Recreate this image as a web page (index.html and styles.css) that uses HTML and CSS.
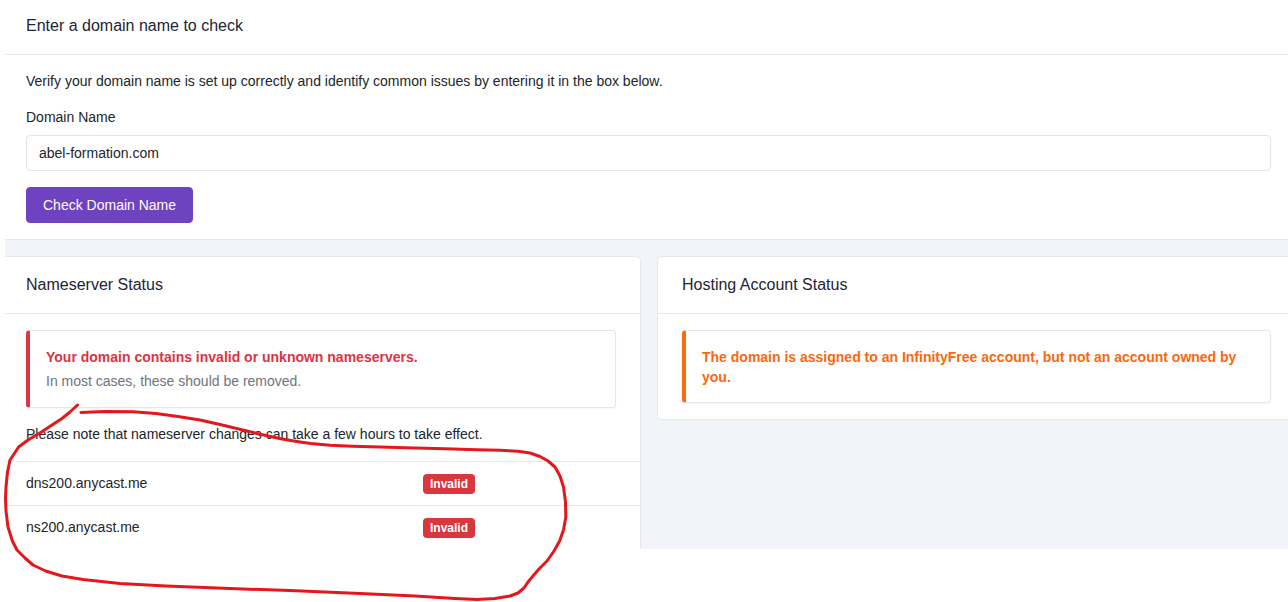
FILE: index.html
```html
<!DOCTYPE html>
<html lang="en">
<head>
<meta charset="utf-8">
<title>Domain Checker</title>
<link rel="stylesheet" href="styles.css">
</head>
<body>
<div class="page">
  <section class="card card-top">
    <div class="card-header card-header-top">Enter a domain name to check</div>
    <div class="card-body card-body-top">
      <p class="intro">Verify your domain name is set up correctly and identify common issues by entering it in the box below.</p>
      <label class="label" for="domain">Domain Name</label>
      <input class="input" id="domain" type="text" value="abel-formation.com">
      <button class="btn" type="button">Check Domain Name</button>
    </div>
  </section>

  <div class="row">
    <section class="card card-left">
      <div class="card-header">Nameserver Status</div>
      <div class="card-body">
        <div class="alert alert-danger">
          <div class="alert-title">Your domain contains invalid or unknown nameservers.</div>
          <div class="alert-text">In most cases, these should be removed.</div>
        </div>
        <p class="note">Please note that nameserver changes can take a few hours to take effect.</p>
      </div>
      <ul class="list">
        <li class="list-item"><span>dns200.anycast.me</span><span class="badge">Invalid</span></li>
        <li class="list-item"><span>ns200.anycast.me</span><span class="badge">Invalid</span></li>
      </ul>
    </section>

    <section class="card card-right">
      <div class="card-header">Hosting Account Status</div>
      <div class="card-body">
        <div class="alert alert-warning">
          <div class="alert-title">The domain is assigned to an InfinityFree account, but not an account owned by you.</div>
        </div>
      </div>
    </section>
  </div>
</div>

<svg class="scribble" viewBox="0 0 1288 602" width="1288" height="602" aria-hidden="true">
  <polyline fill="none" stroke="#e4181c" stroke-width="3" stroke-linejoin="round" stroke-linecap="round"
    points="81,412.5 105,411.5 133,411.8 156,413.5 178,416.5 200,420 220,424.5 249,431.5 266,435.5 282,439 300,442 311,443.6 330,445.3 352,446.3 380,447 415,448 445,448.8 477,449.7 500,450.3 518,451.3 530,453 540,456.5 548,461 555,467 560,476 563.5,487 565.5,502 565.8,517 563.5,530 559.6,541 554,551 547,561 539,569 533,576 528,582 524,588 518,593 510,596 495,598.5 477,599.5 455,598.5 415,596 360,593.5 290,590.6 230,588.5 166,586 120,583.5 83,579.5 62,576 45.6,571 33,565 25,558 17,550 12.4,541 8,527 6,511 5.5,498 6,487 7.5,472 10,460 18.6,447 28,440 41.5,432 52,425 62,418.5 70,412 77.5,405"/>
</svg>
</body>
</html>
```

FILE: styles.css
```css
html, body {
  margin: 0;
  padding: 0;
  background: #ffffff;
  overflow: hidden;
}

body {
  position: relative;
  width: 1288px;
  height: 602px;
  font-family: "Liberation Sans", Arial, Helvetica, sans-serif;
  font-size: 14px;
  line-height: 21px;
  color: #212529;
}

.page {
  margin-left: 1px;
  width: 1295px;
  background: #f1f4f8;
  clip-path: inset(0 0 0 4px);
}

.card {
  background: #ffffff;
  border: 1px solid #e5e8ec;
  border-radius: 5px;
  box-sizing: border-box;
}

.card-top {
  border-top: 0;
  border-radius: 0 0 5px 5px;
  margin-bottom: 16px;
}

.card-header {
  padding: 16px 24px;
  font-size: 16px;
  line-height: 24px;
  color: #1c2533;
  border-bottom: 1px solid #e5e8ec;
}

.card-header-top {
  padding-top: 14px;
}

.card-body {
  padding: 16px 24px;
}

.card-body-top {
  display: flex;
  flex-direction: column;
  align-items: flex-start;
}

.intro {
  margin: 0 0 15px;
}

.label {
  display: block;
  margin-bottom: 7px;
}

.input {
  display: block;
  width: 100%;
  height: 36px;
  box-sizing: border-box;
  padding: 0 12px;
  border: 1px solid #e1e4e8;
  border-radius: 4px;
  font-family: inherit;
  font-size: 14px;
  color: #212529;
  background: #ffffff;
  outline: none;
}

.btn {
  margin-top: 16px;
  height: 36px;
  box-sizing: border-box;
  padding: 0 16px;
  border: 1px solid #6f42c1;
  border-radius: 4px;
  background: #6f42c1;
  color: #ffffff;
  font-family: inherit;
  font-size: 14px;
  line-height: 21px;
}

.row {
  display: grid;
  grid-template-columns: 640px 1fr;
  column-gap: 16px;
  align-items: start;
}

.card-left {
  border-bottom: 0;
  border-radius: 5px 5px 0 0;
}

.alert {
  border: 1px solid #e3e6ea;
  border-radius: 4px;
  padding: 16px 16px 15px;
  box-shadow: 0 1px 2px rgba(0, 0, 0, 0.04);
}

.alert-danger {
  border-left: 4px solid #dc3545;
}

.alert-warning {
  border-left: 4px solid #fd6a0b;
}

.alert-title {
  font-weight: 700;
  line-height: 20px;
}

.alert-danger .alert-title {
  color: #d9343f;
}

.alert-warning .alert-title {
  color: #f7690f;
}

.alert-text {
  margin-top: 4px;
  color: #6c757d;
}

.note {
  margin: 16px 0 0;
}

.list {
  list-style: none;
  margin: 0;
  padding: 0;
}

.list-item {
  display: grid;
  grid-template-columns: 397px auto;
  justify-items: start;
  align-items: center;
  padding: 11px 24px;
  border-top: 1px solid #e5e8ec;
}

.badge {
  display: inline-block;
  padding: 4px 7px;
  font-size: 12px;
  line-height: 12px;
  font-weight: 700;
  color: #ffffff;
  background: #d9363e;
  border-radius: 4px;
}

.scribble {
  position: absolute;
  left: 0;
  top: 0;
  pointer-events: none;
}
```
